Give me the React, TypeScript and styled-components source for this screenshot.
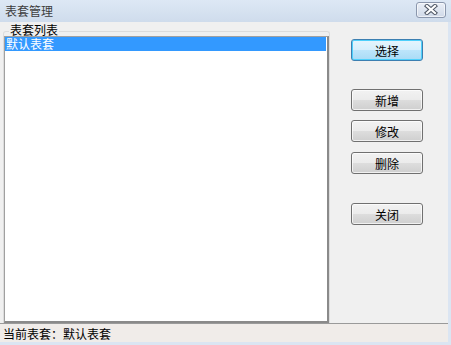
import React from "react";
import styled, { createGlobalStyle } from "styled-components";

const Global = createGlobalStyle`
  html, body { margin: 0; padding: 0; background: #ffffff; }
  body { font-family: "Noto Sans CJK SC", "Liberation Sans", sans-serif; font-size: 12px; }
  * { box-sizing: border-box; }
`;

const Window = styled.div`
  width: 451px;
  height: 345px;
  display: flex;
  flex-direction: column;
  background: #dbe5f2;
  overflow: hidden;
`;

const TitleBar = styled.div`
  height: 22px;
  flex: none;
  display: flex;
  align-items: center;
  justify-content: space-between;
  padding: 0 5px 0 5px;
  background: linear-gradient(#dde8f5, #cfdcec);
`;

const Title = styled.span`
  font-size: 12px;
  line-height: 14px;
  color: #3d3d3d;
`;

const CloseButton = styled.div`
  width: 30px;
  height: 16px;
  margin-top: -3px;
  border: 1px solid #8b97ad;
  border-radius: 3px;
  background: linear-gradient(#eaeff7, #d0d9e8);
  box-shadow: inset 0 0 0 1px rgba(255, 255, 255, 0.6);
  display: flex;
  align-items: center;
  justify-content: center;
`;

const Body = styled.div`
  flex: none;
  height: 301px;
  margin-right: 3px;
  display: flex;
  background: #f0f0f0;
`;

const LeftPane = styled.div`
  width: 330px;
  padding: 9px 0 0 3px;
  display: flex;
  flex-direction: column;
`;

const GroupBox = styled.div`
  position: relative;
  flex: 1;
  display: flex;
  flex-direction: column;
  border: 1px solid #dcdcdc;
  border-bottom: none;
  border-radius: 3px 3px 0 0;
  padding-top: 4px;
`;

const Legend = styled.div`
  position: absolute;
  top: -9px;
  left: 5px;
  height: 13px;
  padding: 0 1px;
  background: #f0f0f0;
  color: #000;
  font-size: 12px;
  line-height: 13px;
`;

const List = styled.div`
  flex: 1;
  background: #fff;
  border-top: 1px solid #a0a0a0;
  border-left: 1px solid #a0a0a0;
  border-right: 2px solid #8a8a8a;
  border-bottom: 2px solid #8a8a8a;
  padding: 0;
`;

const ListItem = styled.div<{ $selected?: boolean }>`
  height: 14px;
  margin-right: 1px;
  padding-left: 1px;
  font-size: 12px;
  line-height: 14px;
  color: ${(p) => (p.$selected ? "#fff" : "#000")};
  background: ${(p) => (p.$selected ? "#3399ff" : "transparent")};
`;

const RightPane = styled.div`
  flex: 1;
  display: flex;
  flex-direction: column;
  padding: 17px 0 0 21px;
`;

const Button = styled.div<{ $primary?: boolean; $space: number }>`
  width: 72px;
  height: 22px;
  margin-top: ${(p) => p.$space}px;
  border-radius: 3px;
  display: flex;
  align-items: center;
  justify-content: center;
  font-size: 12px;
  color: #000;
  border: 1px solid ${(p) => (p.$primary ? "#3c7fb1" : "#707070")};
  background: ${(p) =>
    p.$primary
      ? "linear-gradient(#e6f5fd 0%, #d6effc 50%, #bde5fb 51%, #a9dbf6 100%)"
      : "linear-gradient(#f2f2f2 0%, #ebebeb 50%, #dddddd 51%, #cfcfcf 100%)"};
  box-shadow: ${(p) =>
    p.$primary ? "inset 0 0 0 1px #4fd0fb" : "inset 0 0 0 1px rgba(255,255,255,0.7)"};
`;

const StatusBar = styled.div`
  flex: none;
  height: 19px;
  margin-right: 3px;
  border-top: 1px solid #9a9a9a;
  background: #f0ece9;
  padding-left: 3px;
  display: flex;
  align-items: center;
  font-size: 12px;
  color: #000;
`;

const buttons: { label: string; space: number; primary?: boolean }[] = [
  { label: "选择", space: 0, primary: true },
  { label: "新增", space: 28 },
  { label: "修改", space: 9 },
  { label: "删除", space: 10 },
  { label: "关闭", space: 29 },
];

export default function App() {
  return (
    <>
      <Global />
      <Window>
        <TitleBar>
          <Title>表套管理</Title>
          <CloseButton>
            <svg width="16" height="11" viewBox="0 0 16 11">
              <path d="M4 2 L12 9 M12 2 L4 9" stroke="#4e5664" strokeWidth="4.2" strokeLinecap="square" />
              <path d="M4 2 L12 9 M12 2 L4 9" stroke="#ffffff" strokeWidth="2.2" strokeLinecap="square" />
            </svg>
          </CloseButton>
        </TitleBar>
        <Body>
          <LeftPane>
            <GroupBox>
              <Legend>表套列表</Legend>
              <List>
                <ListItem $selected>默认表套</ListItem>
              </List>
            </GroupBox>
          </LeftPane>
          <RightPane>
            {buttons.map((b) => (
              <Button key={b.label} $primary={b.primary} $space={b.space}>
                {b.label}
              </Button>
            ))}
          </RightPane>
        </Body>
        <StatusBar>当前表套：默认表套</StatusBar>
      </Window>
    </>
  );
}
